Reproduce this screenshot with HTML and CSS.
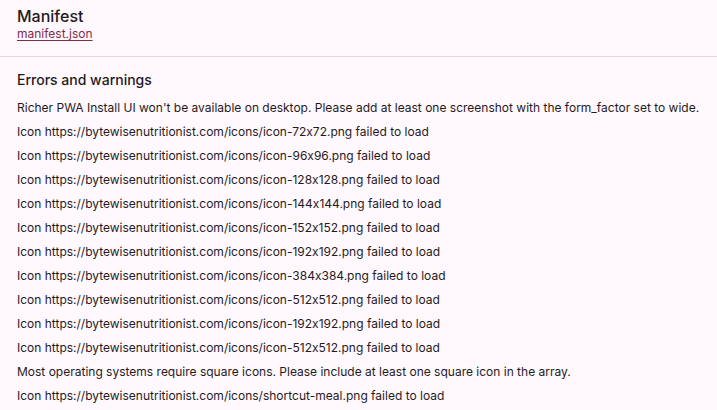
FILE: index.html
```html
<!DOCTYPE html>
<html>
<head>
<meta charset="utf-8">
<link rel="stylesheet" href="styles.css">
</head>
<body>
<div class="panel">
  <header class="header">
    <div class="title">Manifest</div>
    <a class="link" href="#">manifest.json</a>
  </header>
  <section class="section">
    <div class="section-title">Errors and warnings</div>
    <div class="rows">
      <div class="row">Richer PWA Install UI won't be available on desktop. Please add at least one screenshot with the form_factor set to wide.</div>
      <div class="row">Icon https://bytewisenutritionist.com/icons/icon-72x72.png failed to load</div>
      <div class="row">Icon https://bytewisenutritionist.com/icons/icon-96x96.png failed to load</div>
      <div class="row">Icon https://bytewisenutritionist.com/icons/icon-128x128.png failed to load</div>
      <div class="row">Icon https://bytewisenutritionist.com/icons/icon-144x144.png failed to load</div>
      <div class="row">Icon https://bytewisenutritionist.com/icons/icon-152x152.png failed to load</div>
      <div class="row">Icon https://bytewisenutritionist.com/icons/icon-192x192.png failed to load</div>
      <div class="row">Icon https://bytewisenutritionist.com/icons/icon-384x384.png failed to load</div>
      <div class="row">Icon https://bytewisenutritionist.com/icons/icon-512x512.png failed to load</div>
      <div class="row">Icon https://bytewisenutritionist.com/icons/icon-192x192.png failed to load</div>
      <div class="row">Icon https://bytewisenutritionist.com/icons/icon-512x512.png failed to load</div>
      <div class="row">Most operating systems require square icons. Please include at least one square icon in the array.</div>
      <div class="row">Icon https://bytewisenutritionist.com/icons/shortcut-meal.png failed to load</div>
    </div>
  </section>
</div>
</body>
</html>
```
FILE: styles.css
```css
html, body {
  margin: 0;
  padding: 0;
  background: #fff8fd;
}
body {
  font-family: Inter, "Noto Sans", sans-serif;
  font-feature-settings: "calt" 0;
  color: #1f1b1e;
  overflow: hidden;
}
.panel {
  width: 717px;
  height: 410px;
  overflow: hidden;
}
.header {
  padding: 6px 17px 14px;
  border-bottom: 1px solid #f4d3dc;
  display: flex;
  flex-direction: column;
  align-items: flex-start;
}
.title {
  font-size: 16px;
  line-height: 20px;
  font-weight: 500;
}
.link {
  font-size: 12px;
  line-height: 16px;
  color: #7f2b4c;
  text-decoration: underline;
  text-underline-offset: 2px;
}
.section {
  padding: 13px 17px 0;
}
.section-title {
  font-size: 14px;
  line-height: 20px;
  font-weight: 500;
  margin-bottom: 6px;
}
.rows {
  display: flex;
  flex-direction: column;
}
.row {
  font-size: 12px;
  line-height: 24px;
  height: 24px;
  white-space: nowrap;
}
```
